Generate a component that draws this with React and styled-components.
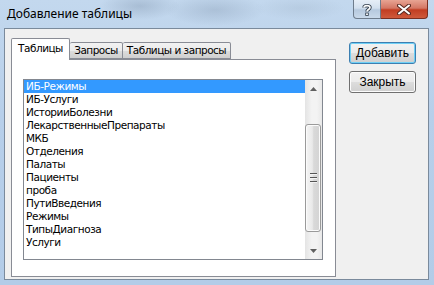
import React from "react";
import styled, { createGlobalStyle } from "styled-components";

const Global = createGlobalStyle`
  html, body { margin: 0; padding: 0; }
  body {
    width: 434px;
    height: 285px;
    overflow: hidden;
    font-family: "Liberation Sans", Arial, sans-serif;
  }
`;

const Frame = styled.div`
  width: 434px;
  height: 285px;
  display: flex;
  flex-direction: column;
  box-sizing: border-box;
  background:
    radial-gradient(ellipse 40px 14px at 140px 6px, rgba(120, 140, 165, 0.35), transparent),
    radial-gradient(ellipse 50px 16px at 215px 10px, rgba(120, 140, 165, 0.3), transparent),
    radial-gradient(ellipse 45px 12px at 300px 8px, rgba(150, 170, 190, 0.25), transparent),
    linear-gradient(180deg, #c3d8ee 0%, #b7cfea 40%, #b3cce8 100%);
`;

const TitleBar = styled.div`
  height: 28px;
  display: flex;
  align-items: flex-start;
  padding-left: 7px;
  padding-right: 6px;
  flex-shrink: 0;
`;

const Title = styled.div`
  margin-top: 6px;
  font-family: "Noto Sans", "Open Sans", sans-serif;
  font-size: 12px;
  line-height: 16px;
  color: #000;
`;

const CaptionButtons = styled.div`
  margin-left: auto;
  display: flex;
  height: 19px;
`;

const CaptionButton = styled.div`
  width: ${({ w }) => w}px;
  height: 19px;
  box-sizing: border-box;
  border: 1px solid ${({ danger }) => (danger ? "#7a2f22" : "#6e7c8c")};
  border-top: none;
  border-left: ${({ danger }) => (danger ? "none" : "1px solid #6e7c8c")};
  border-radius: ${({ danger }) => (danger ? "0 0 4px 0" : "0 0 0 4px")};
  background: ${({ danger }) =>
    danger
      ? "linear-gradient(180deg, #e8a493 0%, #d47764 45%, #c23d22 55%, #cf5a3c 100%)"
      : "linear-gradient(180deg, #e6eef7 0%, #d3e0ee 45%, #b6c9de 55%, #c9d9ea 100%)"};
  display: flex;
  align-items: center;
  justify-content: center;
`;

const Client = styled.div`
  flex: 1;
  margin: 0 5px 5px 4px;
  background: #f0f0f0;
  border: 1px solid #7a8a9c;
  display: flex;
  align-items: flex-start;
  padding: 9px 0 0 6px;
  box-sizing: border-box;
`;

const TabControl = styled.div`
  width: 325px;
  height: 231px;
  display: flex;
  flex-direction: column;
`;

const TabStrip = styled.div`
  height: 21px;
  display: flex;
  align-items: flex-end;
  position: relative;
  z-index: 1;
`;

const Tab = styled.div`
  box-sizing: border-box;
  height: ${({ active }) => (active ? 22 : 17)}px;
  margin-bottom: ${({ active }) => (active ? -1 : 0)}px;
  width: ${({ w }) => w}px;
  border: 1px solid #898c95;
  border-bottom: ${({ active }) => (active ? "none" : "1px solid #898c95")};
  border-left: ${({ first, active }) => (first || active ? "1px solid #898c95" : "none")};
  border-radius: 2px 2px 0 0;
  background: ${({ active }) =>
    active ? "#fff" : "linear-gradient(180deg, #f2f2f2 0%, #ebebeb 50%, #dddddd 51%, #cfcfcf 100%)"};
  font-family: "DejaVu Sans", sans-serif;
  font-size: 10.5px;
  letter-spacing: -0.5px;
  line-height: ${({ active }) => (active ? 19 : 15)}px;
  text-align: center;
  color: #000;
  white-space: nowrap;
`;

const Panel = styled.div`
  flex: 1;
  background: #fff;
  border: 1px solid #898c95;
  padding: 19px 12px 16px 11px;
  display: flex;
`;

const ListBox = styled.div`
  flex: 1;
  border: 1px solid #828790;
  background: #fff;
  display: flex;
`;

const Items = styled.div`
  flex: 1;
  display: flex;
  flex-direction: column;
`;

const Item = styled.div`
  height: 13px;
  line-height: 13px;
  font-family: "DejaVu Sans", sans-serif;
  font-size: 10.5px;
  letter-spacing: -0.45px;
  padding-left: 2px;
  color: ${({ selected }) => (selected ? "#fff" : "#000")};
  background: ${({ selected }) => (selected ? "#3399ff" : "transparent")};
  white-space: nowrap;
`;

const ScrollBar = styled.div`
  width: 17px;
  display: flex;
  flex-direction: column;
  background: linear-gradient(90deg, #e4e4e4 0%, #f3f3f3 40%, #f3f3f3 70%, #e8e8e8 100%);
`;

const Arrow = styled.div`
  height: 17px;
  display: flex;
  align-items: center;
  justify-content: center;
`;

const Track = styled.div`
  flex: 1;
  display: flex;
  flex-direction: column;
  padding-top: 27px;
  padding-bottom: 10px;
`;

const Thumb = styled.div`
  height: 108px;
  margin: 0 1px 0 0;
  box-sizing: border-box;
  border: 1px solid #9a9a9a;
  border-radius: 3px;
  background: linear-gradient(90deg, #f5f5f5 0%, #e9e9e9 45%, #d9d9d9 55%, #d3d3d3 100%);
  box-shadow: inset 0 0 0 1px #fbfbfb;
  display: flex;
  flex-direction: column;
  align-items: center;
  justify-content: center;
  gap: 2px;
`;

const Grip = styled.div`
  width: 7px;
  height: 1px;
  background: #555;
  border-bottom: 1px solid #f2f2f2;
`;

const ButtonColumn = styled.div`
  display: flex;
  flex-direction: column;
  gap: 7px;
  margin-left: 13px;
  padding-top: 4px;
`;

const Button = styled.div`
  width: 67px;
  height: 22px;
  box-sizing: border-box;
  border: 1px solid ${({ primary }) => (primary ? "#3c7fb1" : "#707070")};
  border-radius: 3px;
  background: linear-gradient(180deg, #f2f2f2 0%, #ebebeb 50%, #dddddd 51%, #cfcfcf 100%);
  box-shadow: ${({ primary }) =>
    primary ? "inset 0 0 0 1px #6fd0f6" : "inset 0 0 0 1px #fcfcfc"};
  font-size: 12px;
  line-height: 20px;
  text-align: center;
  color: #000;
`;

const items = [
  "ИБ-Режимы",
  "ИБ-Услуги",
  "ИсторииБолезни",
  "ЛекарственныеПрепараты",
  "МКБ",
  "Отделения",
  "Палаты",
  "Пациенты",
  "проба",
  "ПутиВведения",
  "Режимы",
  "ТипыДиагноза",
  "Услуги",
];

const HelpIcon = () => (
  <svg width="12" height="13" viewBox="0 0 12 13">
    <path
      d="M3 4.5 C3 2 9 2 9 4.5 C9 6.5 6 6.5 6 8.5"
      fill="none"
      stroke="#2e3a48"
      strokeWidth="3.4"
    />
    <path
      d="M3 4.5 C3 2 9 2 9 4.5 C9 6.5 6 6.5 6 8.5"
      fill="none"
      stroke="#fff"
      strokeWidth="1.6"
    />
    <rect x="4.3" y="9.6" width="3.4" height="3.2" fill="#2e3a48" />
    <rect x="5.1" y="10.4" width="1.8" height="1.6" fill="#fff" />
  </svg>
);

const CloseIcon = () => (
  <svg width="14" height="11" viewBox="0 0 14 11">
    <path d="M2 1.5 L12 9.5 M12 1.5 L2 9.5" stroke="#5a2a22" strokeWidth="4" strokeLinecap="round" />
    <path d="M2 1.5 L12 9.5 M12 1.5 L2 9.5" stroke="#fff" strokeWidth="2" strokeLinecap="round" />
  </svg>
);

const Triangle = ({ down }) => (
  <svg width="7" height="4" viewBox="0 0 7 4">
    <path d={down ? "M0 0 L7 0 L3.5 4 Z" : "M0 4 L7 4 L3.5 0 Z"} fill="#606060" />
  </svg>
);

export default function App() {
  return (
    <Frame>
      <Global />
      <TitleBar>
        <Title>Добавление таблицы</Title>
        <CaptionButtons>
          <CaptionButton w={28}>
            <HelpIcon />
          </CaptionButton>
          <CaptionButton w={47} danger>
            <CloseIcon />
          </CaptionButton>
        </CaptionButtons>
      </TitleBar>
      <Client>
        <TabControl>
          <TabStrip>
            <Tab active first w={59}>Таблицы</Tab>
            <Tab w={53}>Запросы</Tab>
            <Tab w={108}>Таблицы и запросы</Tab>
          </TabStrip>
          <Panel>
            <ListBox>
              <Items>
                {items.map((name, i) => (
                  <Item key={name} selected={i === 0}>
                    {name}
                  </Item>
                ))}
              </Items>
              <ScrollBar>
                <Arrow>
                  <Triangle />
                </Arrow>
                <Track>
                  <Thumb>
                    <Grip />
                    <Grip />
                    <Grip />
                  </Thumb>
                </Track>
                <Arrow>
                  <Triangle down />
                </Arrow>
              </ScrollBar>
            </ListBox>
          </Panel>
        </TabControl>
        <ButtonColumn>
          <Button primary>Добавить</Button>
          <Button>Закрыть</Button>
        </ButtonColumn>
      </Client>
    </Frame>
  );
}
